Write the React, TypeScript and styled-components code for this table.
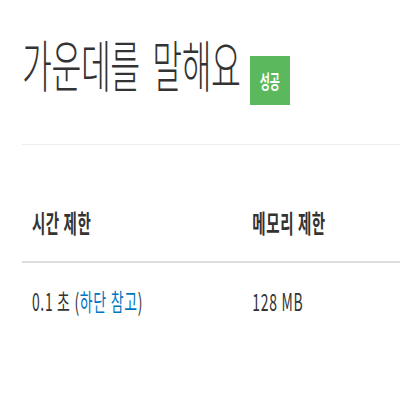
import styled, { createGlobalStyle } from 'styled-components';

const GlobalStyle = createGlobalStyle`
  html, body {
    margin: 0;
    padding: 0;
    background: #fff;
    overflow: hidden;
  }
  body {
    font-family: 'Noto Sans CJK KR', 'Noto Sans', sans-serif;
    color: #333;
  }
`;

// the whole shot is squeezed sideways, so the page is laid out wide and narrowed
const SQUEEZE = 0.58;

const Page = styled.div`
  width: ${400 / SQUEEZE}px;
  padding-left: 38px;
  box-sizing: border-box;
  transform: scaleX(${SQUEEZE});
  transform-origin: 0 0;
`;

const PageHeader = styled.div`
  display: flex;
  align-items: flex-start;
  padding-top: 31px;
  padding-bottom: 39px;
  border-bottom: 1px solid #eee;
`;

const Title = styled.h1`
  margin: 0;
  font-size: 56px;
  font-weight: 300;
  letter-spacing: -0.8px;
  word-spacing: 10px;
  line-height: 64px;
  color: #333;
`;

const Badge = styled.span`
  margin-left: 16px;
  margin-top: 25px;
  width: 69px;
  height: 49px;
  display: flex;
  align-items: center;
  justify-content: center;
  background: #5cb85c;
  color: #fff;
  font-size: 19px;
  font-weight: 700;
`;

const Table = styled.table`
  width: 100%;
  border-collapse: collapse;
  margin-top: 52px;
`;

const Th = styled.th<{ $width?: number }>`
  text-align: left;
  font-size: 25px;
  font-weight: 700;
  letter-spacing: 1px;
  line-height: 34px;
  padding: 8px 17px 22px;
  border-bottom: 2px solid #ddd;
  width: ${(p) => (p.$width ? `${p.$width}px` : 'auto')};
`;

const Td = styled.td`
  font-size: 24px;
  letter-spacing: 1.2px;
  line-height: 32px;
  padding: 22px 17px;
`;

const Link = styled.a`
  color: #0076c0;
  text-decoration: none;
`;

export default function App() {
  return (
    <>
      <GlobalStyle />
      <Page>
        <PageHeader>
          <Title>가운데를 말해요</Title>
          <Badge>성공</Badge>
        </PageHeader>
        <Table>
          <thead>
            <tr>
              <Th $width={346}>시간 제한</Th>
              <Th>메모리 제한</Th>
            </tr>
          </thead>
          <tbody>
            <tr>
              <Td>
                0.1 초 (<Link href="#">하단 참고</Link>)
              </Td>
              <Td>128 MB</Td>
            </tr>
          </tbody>
        </Table>
      </Page>
    </>
  );
}
